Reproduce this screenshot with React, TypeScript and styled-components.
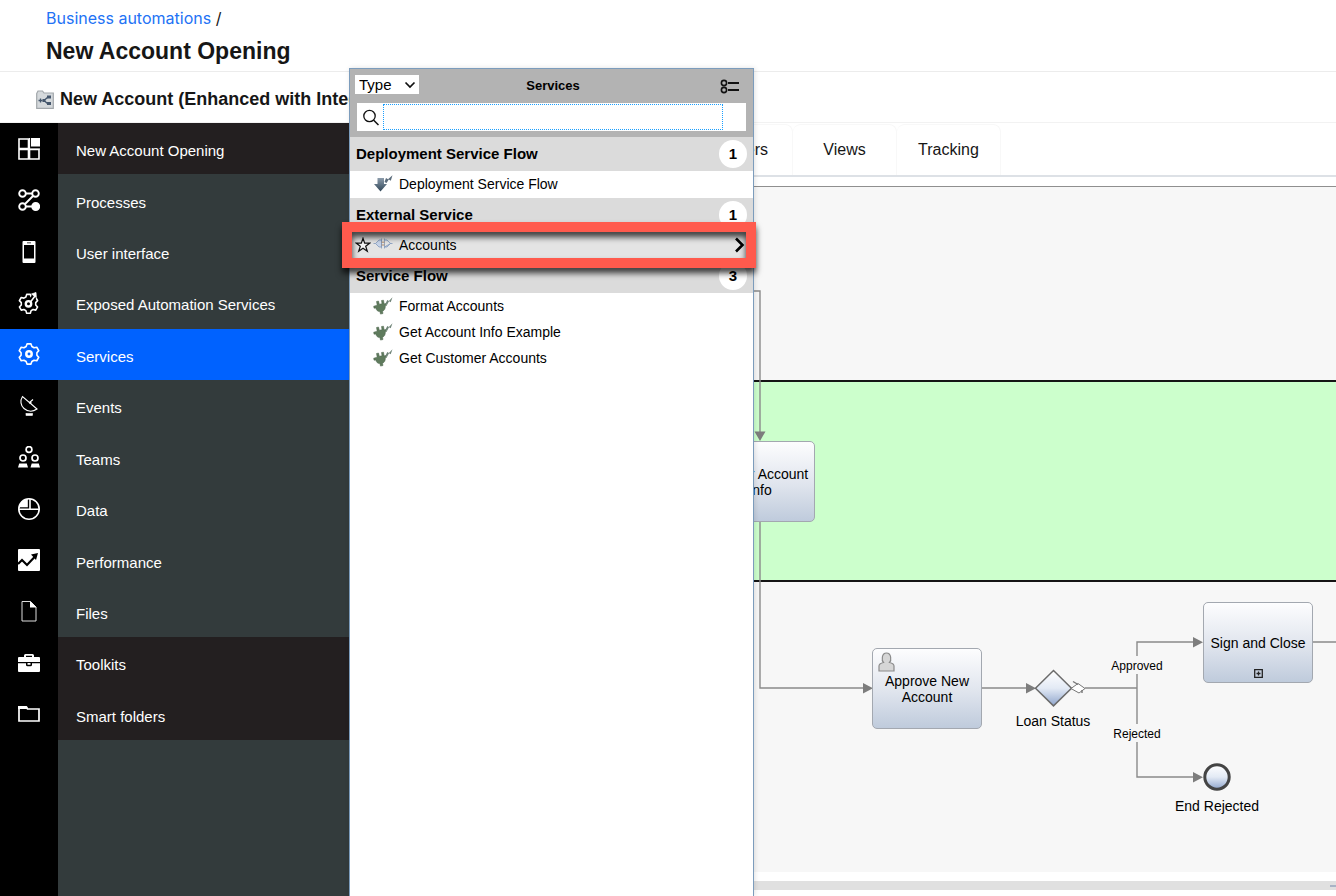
import React from "react";
import styled, { createGlobalStyle, css } from "styled-components";

const GlobalStyle = createGlobalStyle`
  *, *::before, *::after { box-sizing: border-box; }
  body {
    margin: 0;
    background: #fff;
    color: #161616;
    font-family: "Liberation Sans", Arial, Helvetica, sans-serif;
    font-size: 14px;
  }
  button, input, select { font-family: inherit; color: inherit; }
  h1, h2, h3, ul, p { margin: 0; padding: 0; }
  ul { list-style: none; }
`;

/* ---------- page frame ---------- */

const Page = styled.div`
  position: relative;
  display: flex;
  flex-direction: column;
  min-height: 100vh;
  overflow: hidden;
`;

const Header = styled.header`
  display: flex;
  flex-direction: column;
  gap: 8px;
  height: 72px;
  padding: 8px 46px 0;
  border-bottom: 1px solid #ececec;
`;

const Crumbs = styled.nav`
  font-family: Inter, "Open Sans", sans-serif;
  font-size: 16px;
  line-height: 20px;
`;

const CrumbLink = styled.a`
  color: #2272f5;
  text-decoration: none;
`;

const PageTitle = styled.h1`
  font-size: 23px;
  line-height: 30px;
  white-space: nowrap;
`;

const TitleBar = styled.div`
  display: flex;
  align-items: center;
  gap: 6px;
  height: 51px;
  padding: 4px 36px 0;
  border-bottom: 1px solid #f2f2f2;
`;

const ProcessTitle = styled.h2`
  font-size: 18px;
  line-height: 24px;
  white-space: nowrap;
`;

const Body = styled.div`
  display: flex;
  flex: 1;
`;

/* ---------- side navigation ---------- */

const Side = styled.aside`
  display: flex;
  flex-direction: column;
  flex: none;
  width: 349px;
`;

const NavList = styled.ul`
  display: grid;
  grid-template-rows: repeat(12, 1fr);
  height: 617px;
`;

const NavButton = styled.button`
  display: flex;
  width: 100%;
  height: 100%;
  padding: 0;
  border: 0;
  background: none;
  color: #fff;
  font-size: 15px;
  text-align: left;
  cursor: pointer;
`;

const NavIcon = styled.span<{ $active?: boolean }>`
  display: flex;
  align-items: center;
  justify-content: center;
  width: 58px;
  align-self: stretch;
  background: ${(p) => (p.$active ? "#0062ff" : "#000")};
`;

const NavLabel = styled.span<{ $tone: "dark" | "slate" | "active" }>`
  display: flex;
  align-items: center;
  flex: 1;
  align-self: stretch;
  padding: 4px 18px 0;
  background: ${(p) => ({ dark: "#231f20", slate: "#333b3c", active: "#0062ff" })[p.$tone]};
`;

const SideFill = styled.div`
  display: flex;
  flex: 1;
`;

/* ---------- editor ---------- */

const Main = styled.main`
  display: flex;
  flex-direction: column;
  flex: 1;
  min-width: 0;
`;

const Tabs = styled.div`
  display: flex;
  height: 54px;
  padding: 1px 0 0 340px;
  border-bottom: 2px solid #dde1e6;
`;

const Tab = styled.button`
  flex: none;
  width: 104px;
  padding: 0;
  border: 1px solid #f8f8f8;
  border-width: 1px 1px 0 0;
  border-radius: 8px 8px 0 0;
  background: none;
  color: #161616;
  font-size: 16px;
`;

const Canvas = styled.section`
  position: relative;
  display: flex;
  flex-direction: column;
  flex: 1;
  margin-top: 9px;
  border-top: 1px solid #8f8f8f;
  overflow: hidden;
`;

const Lane = styled.div<{ $height?: number; $fill: string }>`
  background: ${(p) => p.$fill};
  ${(p) =>
    p.$height
      ? css`
          height: ${p.$height}px;
          border-bottom: 2px solid #151515;
        `
      : css`
          flex: 1;
        `}
`;

const Edges = styled.svg`
  position: absolute;
  inset: 0;
  width: 100%;
  height: 100%;
`;

const Activity = styled.div<{ $x: number; $y: number }>`
  position: absolute;
  left: ${(p) => p.$x}px;
  top: ${(p) => p.$y}px;
  display: flex;
  align-items: center;
  justify-content: center;
  width: 110px;
  height: 81px;
  padding: 0 4px;
  border: 1px solid #a3a8b0;
  border-radius: 5px;
  background: linear-gradient(#fdfdfe, #dfe4ed 55%, #bfcbdc);
  color: #000;
  font-size: 14px;
  line-height: 16px;
  text-align: center;
`;

const PersonMark = styled.svg`
  position: absolute;
  left: 5px;
  top: 3px;
`;

const ExpandMark = styled.svg`
  position: absolute;
  left: 50px;
  bottom: 4px;
`;

const Caption = styled.span<{ $x: number; $y: number; $small?: boolean }>`
  position: absolute;
  left: ${(p) => p.$x}px;
  top: ${(p) => p.$y}px;
  width: 120px;
  color: #000;
  font-size: ${(p) => (p.$small ? 12 : 14)}px;
  line-height: 16px;
  text-align: center;
`;

const Footer = styled.div`
  padding: 9px 0 6px;
`;

const ScrollTrack = styled.div`
  display: flex;
  align-items: center;
  justify-content: flex-end;
  height: 9px;
  background: #e0e0e0;
`;

const ScrollTick = styled.span`
  width: 6px;
  height: 2px;
  background: #a9b3c6;
`;

/* ---------- services flyout ---------- */

const Flyout = styled.section`
  position: absolute;
  top: 68px;
  bottom: 0;
  left: 349px;
  width: 405px;
  border: 1px solid #7c9cbc;
  border-bottom: 0;
  background: #fff;
  box-shadow: 1px 0 5px rgba(0, 0, 0, 0.12);
  color: #000;
`;

const FlyoutHead = styled.header`
  display: flex;
  flex-direction: column;
  gap: 9px;
  height: 68px;
  padding: 5px 7px 0 6px;
  background: #b3b3b3;
`;

const HeadRow = styled.div`
  display: grid;
  grid-template-columns: 64px 1fr 60px;
  align-items: center;
  height: 20px;
`;

const SelectWrap = styled.label`
  position: relative;
  display: block;
  height: 19px;
  margin-left: -1px;
`;

const TypeSelect = styled.select`
  width: 64px;
  height: 19px;
  padding: 0 0 0 4px;
  border: 0;
  border-radius: 0;
  appearance: none;
  background: #fff;
  font-size: 15px;
  line-height: 19px;
`;

const SelectArrow = styled.svg`
  position: absolute;
  top: 6px;
  right: 4px;
  pointer-events: none;
`;

const FlyoutTitle = styled.h2`
  padding-top: 4px;
  font-size: 13px;
  line-height: 16px;
  text-align: center;
`;

const ViewButton = styled.button`
  justify-self: end;
  display: flex;
  padding: 4px 6px 0;
  border: 0;
  background: none;
`;

const SearchBox = styled.label`
  display: flex;
  align-items: center;
  height: 28px;
  margin-left: 1px;
  padding: 0 23px 0 6px;
  background: #fff;
`;

const SearchInput = styled.input`
  flex: 1;
  min-width: 0;
  height: 26px;
  margin-left: 3px;
  padding: 0 4px;
  border: 1px dotted #1a9fff;
  outline: 0;
  background: #fff;
  font-size: 14px;
`;

const GroupHead = styled.div`
  display: flex;
  align-items: center;
  justify-content: space-between;
  height: 34px;
  padding: 0 6px;
  background: #dbdbdb;
`;

const GroupTitle = styled.h3`
  font-size: 15px;
  line-height: 20px;
`;

const Count = styled.span`
  width: 28px;
  height: 28px;
  border-radius: 50%;
  background: #fff;
  font-size: 15px;
  font-weight: bold;
  line-height: 28px;
  text-align: center;
`;

const ItemList = styled.ul`
  padding-bottom: 1px;
`;

const Item = styled.li<{ $current?: boolean }>`
  position: relative;
  background: ${(p) => (p.$current ? "#e4e4e4" : "#fff")};
`;

const ItemButton = styled.button`
  display: grid;
  grid-template-columns: 16px 20px 1fr 12px;
  column-gap: 2px;
  align-items: center;
  width: 100%;
  height: 26px;
  padding: 0 7px 0 5px;
  border: 0;
  background: none;
  font-size: 14px;
  text-align: left;
`;

const ItemName = styled.span`
  padding-left: 4px;
`;

/* Marker frame that lies over the current row. */
const Highlight = styled.span`
  position: absolute;
  z-index: 1;
  inset: -10px -3px -10px -8px;
  border: 10px solid #ff5a4d;
  filter: drop-shadow(0 5px 3px rgba(0, 0, 0, 0.75));
  pointer-events: none;
`;

/* ---------- icons ---------- */

const gear =
  "M9.5 1h3l.8 2.700 2 .9 2.500-1.300 2.100 2.100-1 2.600.8 1.900L22 11v1.800l-2.200 1.100-.9 2 1.100 2.400-2.100 2.100-2.600-1-1.900.8-.8 2.300h-3l-.8-2.400-1.900-.8-2.700 1.200L2.200 18l1.200-2.400-.8-1.900L.5 12.700V11l2.100-1.200.9-1.900-1.200-2.500 2.100-2.100 2.500 1.200 1.900-.8z";

/* Six-toothed gear built from its outline radius at each angle. */
const gearPath = (cx: number, cy: number, outer: number, inner: number) => {
  const points: string[] = [];
  for (let i = 0; i < 6; i++) {
    const base = (i * 60 - 90) * (Math.PI / 180);
    const steps: [number, number][] = [
      [-21, inner],
      [-11, outer],
      [11, outer],
      [21, inner],
    ];
    steps.forEach(([deg, r]) => {
      const a = base + deg * (Math.PI / 180);
      points.push(`${(cx + r * Math.cos(a)).toFixed(2)} ${(cy + r * Math.sin(a)).toFixed(2)}`);
    });
  }
  return `M${points.join("L")}z`;
};

const navDrawings: Record<string, React.ReactNode> = {
  overview: (
    <>
      <path d="M1 1h9.500v9.500H1zM1 11.500h9.500V21H1zM11.500 11.500H21V21h-9.500z" fill="none" stroke="#fff" strokeWidth="1.600" />
      <rect x="13" y="0" width="9" height="8.500" fill="#fff" />
      <path d="M11.500 0v11H22" fill="none" stroke="#fff" strokeWidth="1.200" />
    </>
  ),
  processes: (
    <g fill="none" stroke="#fff" strokeWidth="1.900">
      <circle cx="4.500" cy="4.500" r="3.300" />
      <circle cx="17.500" cy="4.500" r="3.300" />
      <circle cx="4.500" cy="17.500" r="3.300" />
      <circle cx="17.700" cy="17.500" r="3.500" fill="#fff" />
      <path d="M8 4.500h6M15 7l-8 8M8 17.500h6" />
    </g>
  ),
  ui: (
    <path d="M5.500 0h11A1 1 0 0 1 17.500 1v20a1 1 0 0 1-1 1h-11a1 1 0 0 1-1-1V1a1 1 0 0 1 1-1zM6 4v13.500h10V4zM9 1.500v.8h4v-.8z" fillRule="evenodd" fill="#fff" />
  ),
  exposed: (
    <g fill="none" stroke="#fff" strokeLinejoin="round">
      <path d={gearPath(10.5, 11.8, 9.6, 7.3)} strokeWidth="1.600" />
      <path d="M12 10L19 1" stroke="#000" strokeWidth="5" />
      <circle cx="10.500" cy="11.800" r="2.700" strokeWidth="2.400" />
      <path d="M12.500 10L17 4" strokeWidth="1.600" />
      <path d="M13.500 2l4.500-1.500.3 5z" fill="#fff" strokeWidth=".8" />
    </g>
  ),
  services: (
    <g fill="none" stroke="#fff" strokeLinejoin="round">
      <path d={gearPath(11, 11, 10.3, 8)} strokeWidth="1.600" />
      <circle cx="11" cy="11" r="2.700" strokeWidth="2.500" />
    </g>
  ),
  events: (
    <g fill="none" stroke="#fff">
      <path d="M4.500 1.500c-2.500 4-2 9 1.500 12 4 3.300 9 3.300 13 .5zM11.500 7.500l3.500-3" strokeWidth="1.100" />
      <path d="M11 7.800h2.500" strokeWidth="1.500" />
      <rect x="8" y="18.500" width="6.500" height="2" fill="#fff" strokeWidth=".6" />
    </g>
  ),
  teams: (
    <g fill="none" stroke="#fff" strokeWidth="1.700">
      <circle cx="11" cy="3.500" r="2.900" />
      <circle cx="5" cy="12" r="3" />
      <circle cx="17" cy="12" r="3" />
      <path d="M0 21.500l1.200-4h7.600l1.200 4zM12.500 21.500l1.200-4h7.100l1.200 4z" fill="#fff" stroke="none" />
    </g>
  ),
  data: (
    <>
      <circle cx="11" cy="11" r="10.200" fill="none" stroke="#fff" strokeWidth="1.600" />
      <path d="M12 1v9.700M1 11.300h20.500" stroke="#fff" strokeWidth="1.600" />
      <path d="M9.800 9.300H1A10 10 0 0 1 9.800.8z" fill="#fff" />
    </>
  ),
  performance: (
    <>
      <rect width="22" height="22" rx="1" fill="#fff" />
      <path d="M0 15l4-4 5 5 8.500-9" fill="none" stroke="#000" strokeWidth="2.200" />
      <path d="M13 5.500l7-1.500-2 7z" fill="#000" />
    </>
  ),
  files: (
    <>
      <path d="M4 1.500h8.500l5.500 5.500v14H4z" fill="none" stroke="#ddd" strokeWidth="1" />
      <path d="M12 1l6.500 6.500H12z" fill="#fff" />
    </>
  ),
  toolkits: (
    <>
      <path d="M0 6a1 1 0 0 1 1-1h5V3.500A1.500 1.500 0 0 1 7.500 2h7A1.500 1.500 0 0 1 16 3.500V5h5a1 1 0 0 1 1 1v4H0zM8 3.800V5h6V3.800z" fillRule="evenodd" fill="#fff" />
      <path d="M0 11.200h8v1.500a1.500 1.500 0 0 0 1.500 1.500h3a1.500 1.500 0 0 0 1.500-1.500v-1.500h8V19a1 1 0 0 1-1 1H1a1 1 0 0 1-1-1zM9.500 11h3v1.800h-3z" fill="#fff" />
    </>
  ),
  folders: (
    <>
      <path d="M1 4v14h20V6H9.500L8.500 4z" fill="none" stroke="#fff" strokeWidth="1.700" />
      <path d="M0 3h8.500l1.500 3H0z" fill="#fff" />
    </>
  ),
};

const PlugIcon = () => (
  <svg width="20" height="18" viewBox="0 0 20 18" aria-hidden="true">
    <path d="M3.500 4.500l2-.5.8 3.200L9 6.800 8.500 3.500l2-.3.6 3.600 2-.3.4 2-1.200.3c.2 3-.8 4.600-2.800 5.400l.5 2.300-2.500.6-.6-2.500C4.700 14.800 3.200 13 2.800 11L1 11.200.7 9.200l3.500-1z" fill="#5f7b5d" stroke="#496148" strokeWidth=".5" />
    <path d="M12.500 6.500l1.800-3.600 1.600 1L19.500.3l-1.800 5-1.700-1-2 3.700z" fill="#6f8478" />
  </svg>
);

const DeployIcon = () => (
  <svg width="20" height="18" viewBox="0 0 20 18" aria-hidden="true">
    <defs>
      <linearGradient id="deploy" x1="0" y1="0" x2="0" y2="1">
        <stop offset="0" stopColor="#8c9cab" />
        <stop offset="1" stopColor="#2f4557" />
      </linearGradient>
    </defs>
    <path d="M4.500 3h6.500v6H14l-6.500 7.500L1 9h3.500z" fill="url(#deploy)" />
    <path d="M11.500 7l1.500-4 2 1.200L19.500.3 17.800 5.700 15.800 4.600 13.500 8z" fill="#5b6c7b" />
  </svg>
);

const ExternalIcon = () => (
  <svg width="20" height="18" viewBox="0 0 20 18" aria-hidden="true">
    <g fill="#c6d3e8" stroke="#8098bb" strokeWidth=".8">
      <path d="M.5 7.500h2L6 4h2.500v7H6L2.500 7.500M11.500 4h2.500L17.500 7.500h2M17.500 7.500L14 11h-2.500z" />
      <path d="M8.500 2.500v10M11.500 2.500v10" />
    </g>
    <path d="M8.500 6.200h3M8.500 9h3" stroke="#b08a6b" strokeWidth="1" />
  </svg>
);

const StarIcon = () => (
  <svg width="16" height="16" viewBox="0 0 16 16" aria-hidden="true">
    <path d="M8 1.200l1.700 4.900h5.200l-4.200 3.100 1.600 5L8 11.200l-4.300 3 1.600-5L1.100 6.100h5.200z" fill="#f3f3f3" stroke="#111" strokeWidth="1.200" />
  </svg>
);

const ChevronIcon = () => (
  <svg width="12" height="16" viewBox="0 0 12 16" aria-hidden="true">
    <path d="M2 1.500L8.500 8 2 14.500" fill="none" stroke="#000" strokeWidth="2.600" />
  </svg>
);

/* ---------- data ---------- */

type Tone = "dark" | "slate" | "active";

const navItems: { id: string; label: string; tone: Tone }[] = [
  { id: "overview", label: "New Account Opening", tone: "dark" },
  { id: "processes", label: "Processes", tone: "slate" },
  { id: "ui", label: "User interface", tone: "slate" },
  { id: "exposed", label: "Exposed Automation Services", tone: "slate" },
  { id: "services", label: "Services", tone: "active" },
  { id: "events", label: "Events", tone: "slate" },
  { id: "teams", label: "Teams", tone: "slate" },
  { id: "data", label: "Data", tone: "slate" },
  { id: "performance", label: "Performance", tone: "slate" },
  { id: "files", label: "Files", tone: "slate" },
  { id: "toolkits", label: "Toolkits", tone: "dark" },
  { id: "folders", label: "Smart folders", tone: "dark" },
];

const groups = [
  { title: "Deployment Service Flow", icon: <DeployIcon />, items: ["Deployment Service Flow"] },
  { title: "External Service", icon: <ExternalIcon />, items: ["Accounts"] },
  {
    title: "Service Flow",
    icon: <PlugIcon />,
    items: ["Format Accounts", "Get Account Info Example", "Get Customer Accounts"],
  },
];

const current = "Accounts";

/* ---------- parts ---------- */

const SideNav = () => (
  <Side>
    <NavList>
      {navItems.map((n) => (
        <li key={n.id}>
          <NavButton>
            <NavIcon $active={n.tone === "active"}>
              <svg width="22" height="22" viewBox="0 0 22 22" aria-hidden="true">
                {navDrawings[n.id]}
              </svg>
            </NavIcon>
            <NavLabel $tone={n.tone}>{n.label}</NavLabel>
          </NavButton>
        </li>
      ))}
    </NavList>
    <SideFill>
      <NavIcon />
      <NavLabel $tone="slate" />
    </SideFill>
  </Side>
);

const Diagram = () => (
  <Canvas>
    <Lane $height={195} $fill="#f7f7f7" />
    <Lane $height={200} $fill="#ccffcc" />
    <Lane $fill="#f7f7f7" />
    <Edges aria-hidden="true">
      <defs>
        <linearGradient id="gate" x1="0" y1="0" x2="0" y2="1">
          <stop offset="0" stopColor="#fff" />
          <stop offset=".5" stopColor="#e3eaf5" />
          <stop offset="1" stopColor="#8fa5cc" />
        </linearGradient>
      </defs>
      <g fill="none" stroke="#8a8a8a" strokeWidth="1.400">
        <path d="M360 104h51v146M411 335v166h104M633 501h44M736 501h52M788 469v-14h57M788 487v50M788 555v35h57M963 455h400" />
      </g>
      <g fill="#7d7d7d">
        <path d="M405.500 244.500h11L411 254zM514 496v10.500l10-5.200zM677 496v10.500l10-5.200zM844 450v10.500l10-5.200zM844 585v10.500l10-5.200z" />
      </g>
      <path d="M704.500 483.500l18 17.700-18 17.700-18-17.700z" fill="url(#gate)" stroke="#6b6b6b" strokeWidth="1.500" />
      <path d="M722 501.500l7-5 7 5-6 4.500z" fill="#fff" stroke="#777" strokeWidth="1" />
      <path d="M724 494.500l5 3M733 503v3" stroke="#777" strokeWidth="1.400" />
      <circle cx="868" cy="590" r="12.200" fill="url(#gate)" stroke="#444" strokeWidth="3" />
    </Edges>
    <Activity $x={356} $y={254}>Gather Account Info</Activity>
    <Activity $x={523} $y={461}>
      <PersonMark width="17" height="20" viewBox="0 0 17 20" aria-hidden="true">
        <path d="M1 19v-5c0-2 2-3 4.500-3.500C3.500 8.500 3.500 1 8.500 1s5 7.500 3 9.500C14 11 16 12 16 14v5z" fill="#d6d6d6" stroke="#8a8a8a" strokeWidth="1.200" />
      </PersonMark>
      Approve New Account
    </Activity>
    <Activity $x={854} $y={415}>
      Sign and Close
      <ExpandMark width="9" height="9" viewBox="0 0 9 9" aria-hidden="true">
        <path d="M.7.7h7.600v7.600H.7zM4.500 2.500v4M2.500 4.500h4" fill="none" stroke="#222" strokeWidth="1.300" />
      </ExpandMark>
    </Activity>
    <Caption $x={644} $y={526}>Loan Status</Caption>
    <Caption $x={808} $y={611}>End Rejected</Caption>
    <Caption $x={728} $y={471} $small>Approved</Caption>
    <Caption $x={728} $y={539} $small>Rejected</Caption>
  </Canvas>
);

const ServicesFlyout = () => (
  <Flyout aria-label="Services">
    <FlyoutHead>
      <HeadRow>
        <SelectWrap>
          <TypeSelect aria-label="Group by" defaultValue="Type">
            <option>Type</option>
          </TypeSelect>
          <SelectArrow width="12" height="8" viewBox="0 0 12 8" aria-hidden="true">
            <path d="M1.500 1.500L6 6l4.500-4.500" fill="none" stroke="#111" strokeWidth="1.700" />
          </SelectArrow>
        </SelectWrap>
        <FlyoutTitle>Services</FlyoutTitle>
        <ViewButton aria-label="Change view">
          <svg width="20" height="15" viewBox="0 0 20 15" aria-hidden="true">
            <g fill="none" stroke="#111" strokeWidth="1.600">
              <circle cx="4" cy="4" r="2.600" />
              <circle cx="4" cy="11" r="2.600" />
            </g>
            <path d="M8 4h11M8 11h11" stroke="#111" strokeWidth="2" />
          </svg>
        </ViewButton>
      </HeadRow>
      <SearchBox>
        <svg width="17" height="17" viewBox="0 0 17 17" aria-hidden="true">
          <circle cx="6.500" cy="7" r="5.700" fill="none" stroke="#111" strokeWidth="1.300" />
          <path d="M10.500 11l5 5" stroke="#111" strokeWidth="1.500" />
        </svg>
        <SearchInput type="text" aria-label="Search services" />
      </SearchBox>
    </FlyoutHead>
    {groups.map((g) => (
      <div key={g.title}>
        <GroupHead>
          <GroupTitle>{g.title}</GroupTitle>
          <Count>{g.items.length}</Count>
        </GroupHead>
        <ItemList>
          {g.items.map((name) => (
            <Item key={name} $current={name === current}>
              <ItemButton>
                {name === current ? <StarIcon /> : <span />}
                {g.icon}
                <ItemName>{name}</ItemName>
                {name === current && <ChevronIcon />}
              </ItemButton>
              {name === current && <Highlight />}
            </Item>
          ))}
        </ItemList>
      </div>
    ))}
  </Flyout>
);

export default function App() {
  return (
    <Page>
      <GlobalStyle />
      <Header>
        <Crumbs aria-label="Breadcrumb">
          <CrumbLink href="#automations">Business automations</CrumbLink> /
        </Crumbs>
        <PageTitle>New Account Opening</PageTitle>
      </Header>
      <TitleBar>
        <svg width="18" height="19" viewBox="0 0 18 19" aria-hidden="true">
          <path d="M.7 3.500L2 1h4.500L8 3h9.300v15.300H.7z" fill="#d5d9dc" stroke="#a2a7ab" strokeWidth="1.200" />
          <path d="M2.500 10.500h4M4.500 8.500v4M8 10.500l4-3.500M8 10.500l4 3.500" stroke="#44566c" strokeWidth="1.300" />
          <path d="M11 5.500h4v3h-4zM11 12h4v3h-4zM6.500 9h3v3h-3z" fill="#44566c" />
        </svg>
        <ProcessTitle>New Account (Enhanced with Integration)</ProcessTitle>
      </TitleBar>
      <Body>
        <SideNav />
        <Main>
          <Tabs>
            <Tab>Servers</Tab>
            <Tab>Views</Tab>
            <Tab>Tracking</Tab>
          </Tabs>
          <Diagram />
          <Footer>
            <ScrollTrack>
              <ScrollTick />
            </ScrollTrack>
          </Footer>
        </Main>
      </Body>
      <ServicesFlyout />
    </Page>
  );
}
